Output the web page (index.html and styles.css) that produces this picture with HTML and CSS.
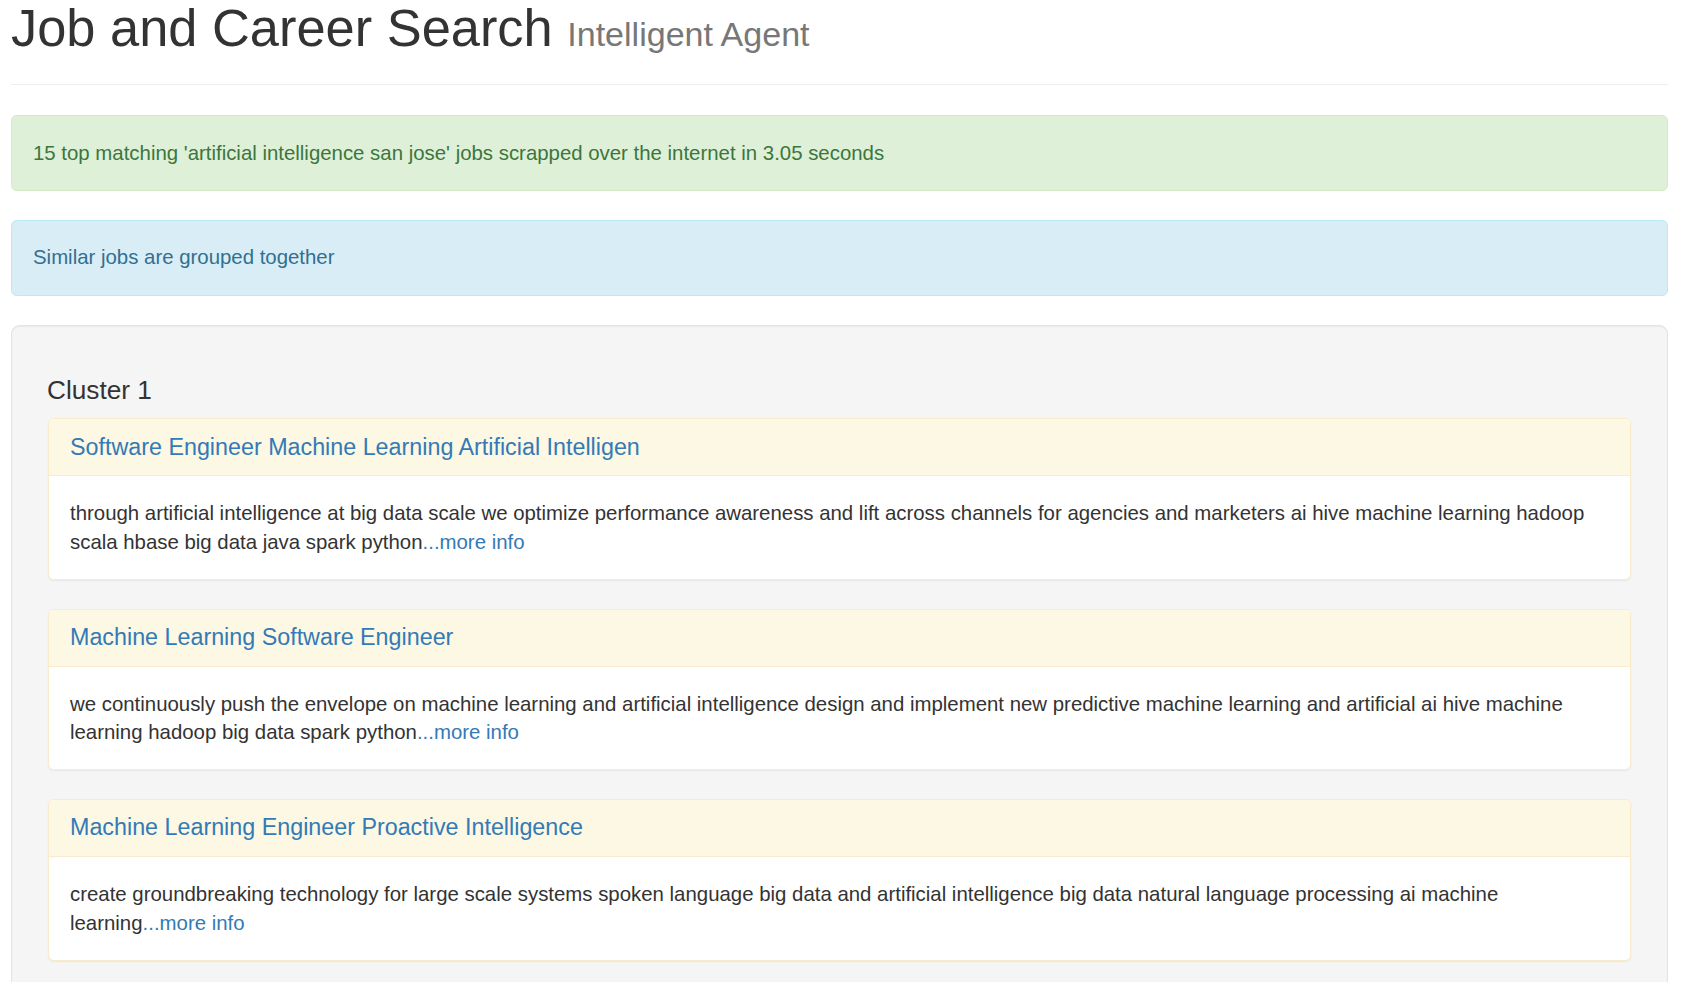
FILE: index.html
```html
<!DOCTYPE html>
<html lang="en">
<head>
<meta charset="utf-8">
<title>Job and Career Search</title>
<link rel="stylesheet" href="styles.css">
</head>
<body>
<div class="page">
  <div class="container">
    <div class="page-header">
      <h1>Job and Career Search <small>Intelligent Agent</small></h1>
    </div>
    <div class="alert alert-success">15 top matching 'artificial intelligence san jose' jobs scrapped over the internet in 3.05 seconds</div>
    <div class="alert alert-info">Similar jobs are grouped together</div>
    <div class="well">
      <h4 class="cluster-title">Cluster 1</h4>
      <div class="panel">
        <div class="panel-heading"><a class="panel-title" href="#">Software Engineer Machine Learning Artificial Intelligen</a></div>
        <div class="panel-body">through artificial intelligence at big data scale we optimize performance awareness and lift across channels for agencies and marketers ai hive machine learning hadoop scala hbase big data java spark python<a href="#">...more info</a></div>
      </div>
      <div class="panel">
        <div class="panel-heading"><a class="panel-title" href="#">Machine Learning Software Engineer</a></div>
        <div class="panel-body">we continuously push the envelope on machine learning and artificial intelligence design and implement new predictive machine learning and artificial ai hive machine learning hadoop big data spark python<a href="#">...more info</a></div>
      </div>
      <div class="panel">
        <div class="panel-heading"><a class="panel-title" href="#">Machine Learning Engineer Proactive Intelligence</a></div>
        <div class="panel-body">create groundbreaking technology for large scale systems spoken language big data and artificial intelligence big data natural language processing ai machine learning<a href="#">...more info</a></div>
      </div>
    </div>
  </div>
</div>
</body>
</html>
```
FILE: styles.css
```css
* { box-sizing: border-box; }
html, body { margin: 0; padding: 0; background: #fff; }
body {
  font-family: "Liberation Sans", Arial, Helvetica, sans-serif;
  font-size: 20.4px;
  line-height: 28.8px;
  color: #333;
}
a { color: #337ab7; text-decoration: none; }
.page { height: 982px; overflow: hidden; }
.container { padding: 0 14px 0 11px; }
.page-header {
  padding-bottom: 13px;
  margin: 0 0 30px;
  border-bottom: 1.5px solid #eee;
}
.page-header h1 {
  margin: 0 0 14px;
  font-size: 52.4px;
  font-weight: 500;
  line-height: 57px;
  color: #333;
}
.page-header h1 small {
  font-size: 65%;
  font-weight: 400;
  line-height: 1;
  color: #777;
}
.alert {
  padding: 22.5px 21px;
  margin-bottom: 29px;
  border: 1.5px solid transparent;
  border-radius: 5.7px;
}
.alert-success { color: #3c763d; background: #dff0d8; border-color: #d6e9c6; }
.alert-info { color: #31708f; background: #d9edf7; border-color: #bce8f1; }
.well {
  padding: 34.5px 35px 34px 35px;
  background: #f5f5f5;
  border: 1.5px solid #e3e3e3;
  border-radius: 8.6px;
  box-shadow: inset 0 1px 1px rgba(0,0,0,.05);
  min-height: 800px;
}
.cluster-title {
  margin: 16px 0 14px;
  font-size: 26.2px;
  font-weight: 500;
  line-height: 28.3px;
  color: #333;
}
.panel {
  margin: 0 1px 29px 1px;
  background: #fff;
  border: 1.5px solid #faebcc;
  border-radius: 5.7px;
  box-shadow: 0 1px 2px rgba(0,0,0,.06);
}
.panel-heading {
  padding: 15.3px 21px;
  background: #fcf8e3;
  border-bottom: 1.5px solid #faebcc;
  border-radius: 4.5px 4.5px 0 0;
}
.panel-title {
  display: block;
  font-size: 23.3px;
  line-height: 25.2px;
  color: #337ab7;
}
.panel-body {
  padding: 23px 21px 22px;
}
```
